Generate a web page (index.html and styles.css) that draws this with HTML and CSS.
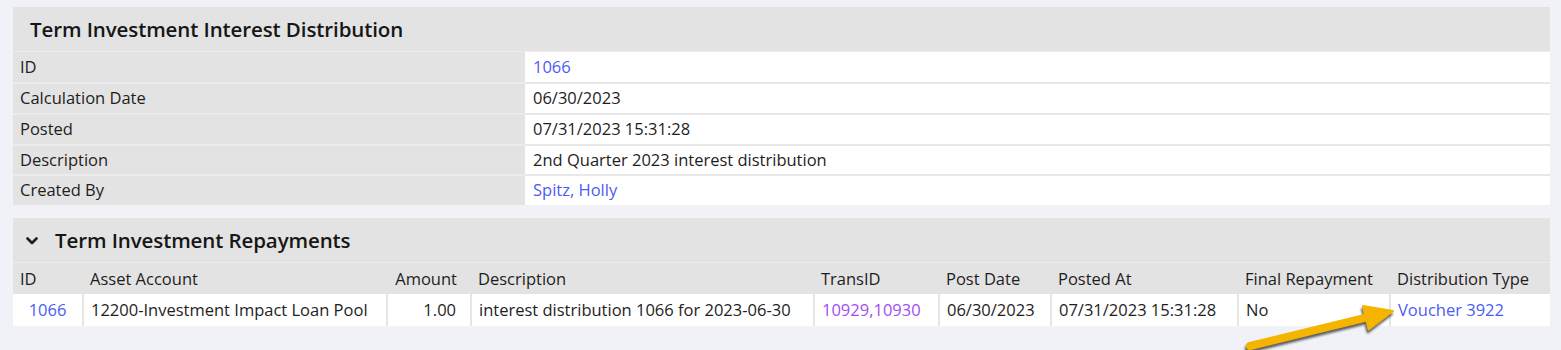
FILE: index.html
```html
<!DOCTYPE html>
<html>
<head>
<meta charset="utf-8">
<link rel="stylesheet" href="styles.css">
</head>
<body>
<div class="page">
  <section class="panel">
    <div class="panel-head"><h2 class="panel-title">Term Investment Interest Distribution</h2></div>
    <table class="detail">
      <tr><th>ID</th><td><a class="link" href="#">1066</a></td></tr>
      <tr><th>Calculation Date</th><td>06/30/2023</td></tr>
      <tr><th>Posted</th><td>07/31/2023 15:31:28</td></tr>
      <tr><th>Description</th><td>2nd Quarter 2023 interest distribution</td></tr>
      <tr><th>Created By</th><td><a class="link" href="#">Spitz, Holly</a></td></tr>
    </table>
  </section>

  <section class="panel panel-second">
    <div class="panel-head head-collapsible">
      <svg class="chev" width="12" height="8" viewBox="0 0 12 8"><path d="M1.5 1.5 L6 6 L10.5 1.5" fill="none" stroke="#1d1d1d" stroke-width="2.6" stroke-linecap="round" stroke-linejoin="round"/></svg>
      <h2 class="panel-title">Term Investment Repayments</h2>
    </div>
    <table class="grid">
      <colgroup>
        <col class="c-id"><col class="c-acct"><col class="c-amt"><col class="c-desc"><col class="c-trans"><col class="c-pdate"><col class="c-pat"><col class="c-final"><col class="c-dist">
      </colgroup>
      <thead>
        <tr><th>ID</th><th>Asset Account</th><th class="num">Amount</th><th>Description</th><th>TransID</th><th>Post Date</th><th>Posted At</th><th>Final Repayment</th><th>Distribution Type</th></tr>
      </thead>
      <tbody>
        <tr>
          <td class="center"><a class="link" href="#">1066</a></td>
          <td>12200-Investment Impact Loan Pool</td>
          <td class="num">1.00</td>
          <td>interest distribution 1066 for 2023-06-30</td>
          <td><a class="link visited" href="#">10929,10930</a></td>
          <td>06/30/2023</td>
          <td>07/31/2023 15:31:28</td>
          <td>No</td>
          <td><a class="link" href="#">Voucher 3922</a></td>
        </tr>
      </tbody>
    </table>
    <svg class="arrow" width="180" height="60" viewBox="0 0 180 60">
      <defs>
        <filter id="sh" x="-20%" y="-40%" width="140%" height="180%">
          <feGaussianBlur stdDeviation="1.2"/>
        </filter>
      </defs>
      <g transform="translate(-1,3)" filter="url(#sh)" opacity="0.7" fill="#222" stroke="#222">
        <line x1="17" y1="48" x2="134" y2="19.4" stroke-width="8" stroke-linecap="round"/>
        <polygon points="160,13 129.9,8 135.7,31.4" stroke-width="2" stroke-linejoin="round"/>
      </g>
      <g fill="#f4b400" stroke="#f4b400">
        <line x1="17" y1="48" x2="134" y2="19.4" stroke-width="8" stroke-linecap="round"/>
        <polygon points="160,13 129.9,8 135.7,31.4" stroke-width="2" stroke-linejoin="round"/>
      </g>
    </svg>
  </section>
</div>
</body>
</html>
```

FILE: styles.css
```css
html, body {
  height: 100%;
}
html {
  overflow: hidden;
  background: #f1f2f7;
}
body {
  margin: 0;
  padding: 0;
  font-family: "Open Sans", "Noto Sans", sans-serif;
  font-size: 16.5px;
  color: #1e1e1e;
}
.page {
  box-sizing: border-box;
  min-height: 100%;
  padding: 7px 11px 0 13px;
}
.panel {
  background: #e3e3e3;
}
.panel-second {
  margin-top: 13px;
  position: relative;
}
.panel-head {
  height: 44px;
  display: flex;
  align-items: center;
  padding-left: 17px;
  border-bottom: 1px solid #ececec;
}
.head-collapsible {
  padding-left: 13px;
  gap: 17px;
}
.chev { display: block; margin-top: 1px; }
.panel-title {
  margin: 0;
  font-size: 20.5px;
  font-weight: 600;
  color: #161616;
  letter-spacing: -0.1px;
}
table {
  border-collapse: collapse;
  width: 100%;
}
.detail th, .detail td {
  padding: 0 7px;
  line-height: 28.75px;
  text-align: left;
  font-weight: normal;
  border-top: 2px solid #e8e8e8;
}
.detail tr:first-child th, .detail tr:first-child td {
  border-top: 0;
  line-height: 30px;
}
.detail th {
  width: 498px;
  background: #e3e3e3;
  border-top-color: #ebebeb;
}
.detail td {
  background: #fff;
  padding-left: 8px;
}
.grid { table-layout: fixed; }
.c-id { width: 70px; }
.c-acct { width: 304px; }
.c-amt { width: 84px; }
.c-desc { width: 343px; }
.c-trans { width: 125px; }
.c-pdate { width: 112px; }
.c-pat { width: 187px; }
.c-final { width: 152px; }
.c-dist { width: 160px; }
.grid th {
  line-height: 31px;
  padding: 0 7px;
  text-align: left;
  font-weight: normal;
  background: #e3e3e3;
  white-space: nowrap;
  overflow: hidden;
}
.grid td {
  line-height: 32px;
  padding: 0 7px;
  background: #fff;
  border-left: 2px solid #e6e6e6;
  white-space: nowrap;
  overflow: hidden;
}
.grid td:first-child { border-left: 0; }
.grid .num { text-align: right; padding-right: 14px; }
.grid .center { text-align: center; }
.link {
  color: #4b5cf5;
  text-decoration: none;
}
.link.visited { color: #a14ef0; }
.arrow {
  position: absolute;
  left: 1220px;
  top: 80px;
  overflow: visible;
}
```
